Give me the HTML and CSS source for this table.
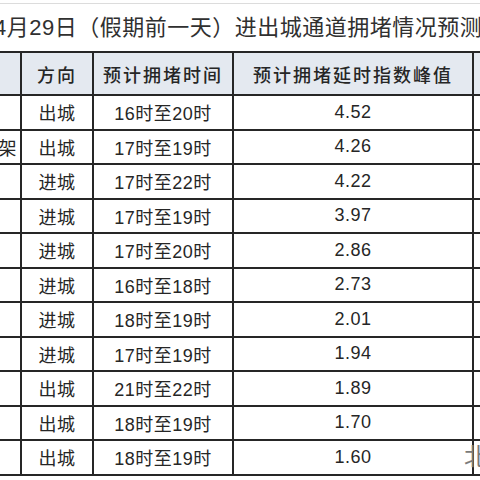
FILE: index.html
```html
<!DOCTYPE html>
<html lang="zh">
<head>
<meta charset="utf-8">
<title>进出城通道拥堵情况预测</title>
<link rel="stylesheet" href="styles.css">
</head>
<body>
<div class="page">
  <div class="topline"></div>
  <h1 class="title">4月29日（假期前一天）进出城通道拥堵情况预测</h1>
  <table class="grid">
    <colgroup><col class="c0"><col class="c1"><col class="c2"><col class="c3"><col class="c4"></colgroup>
    <thead>
      <tr><th></th><th>方向</th><th>预计拥堵时间</th><th>预计拥堵延时指数峰值</th><th></th></tr>
    </thead>
    <tbody>
      <tr><td></td><td>出城</td><td>16时至20时</td><td>4.52</td><td></td></tr>
      <tr><td class="name">架</td><td>出城</td><td>17时至19时</td><td>4.26</td><td></td></tr>
      <tr><td></td><td>进城</td><td>17时至22时</td><td>4.22</td><td></td></tr>
      <tr><td></td><td>进城</td><td>17时至19时</td><td>3.97</td><td></td></tr>
      <tr><td></td><td>进城</td><td>17时至20时</td><td>2.86</td><td></td></tr>
      <tr><td></td><td>进城</td><td>16时至18时</td><td>2.73</td><td></td></tr>
      <tr><td></td><td>进城</td><td>18时至19时</td><td>2.01</td><td></td></tr>
      <tr><td></td><td>进城</td><td>17时至19时</td><td>1.94</td><td></td></tr>
      <tr><td></td><td>出城</td><td>21时至22时</td><td>1.89</td><td></td></tr>
      <tr><td></td><td>出城</td><td>18时至19时</td><td>1.70</td><td></td></tr>
      <tr><td></td><td>出城</td><td>18时至19时</td><td>1.60</td><td></td></tr>
    </tbody>
  </table>
  <span class="mark">北</span>
</div>
</body>
</html>
```

FILE: styles.css
```css
html, body {
  margin: 0;
  background: #ffffff;
}
.page {
  position: relative;
  width: 480px;
  height: 480px;
  overflow: hidden;
  font-family: "Liberation Sans", "Noto Sans CJK SC", sans-serif;
  color: #262626;
}
.topline {
  height: 3px;
  border-bottom: 1px solid #dcdcdc;
}
.title {
  margin: 0 0 0 -6px;
  height: 47px;
  line-height: 47px;
  font-size: 22px;
  font-weight: normal;
  letter-spacing: 0.5px;
  white-space: nowrap;
  color: #303030;
  font-family: "Liberation Sans", "Noto Sans CJK SC", sans-serif;
}
.grid {
  border-collapse: collapse;
  table-layout: fixed;
  width: 612px;
  margin-left: -60px;
}
.c0 { width: 80px; }
.c1 { width: 72px; }
.c2 { width: 140px; }
.c3 { width: 240px; }
.c4 { width: 80px; }
.grid th, .grid td {
  border: 2px solid #262626;
  padding: 0;
  text-align: center;
  white-space: nowrap;
  overflow: hidden;
}
.grid th {
  height: 41px;
  background: #e4e9f0;
  font-size: 18px;
  font-weight: 500;
  letter-spacing: 2px;
  color: #262626;
}
.grid td {
  height: 32.5px;
  font-size: 18px;
  letter-spacing: 0.5px;
  color: #262626;
}
.grid td.name {
  text-align: right;
  padding-right: 3px;
}
.mark {
  position: absolute;
  left: 464px;
  top: 441px;
  font-size: 24px;
  line-height: 28px;
  color: #7a7a7a;
  font-family: "Noto Sans CJK SC", sans-serif;
}
```
